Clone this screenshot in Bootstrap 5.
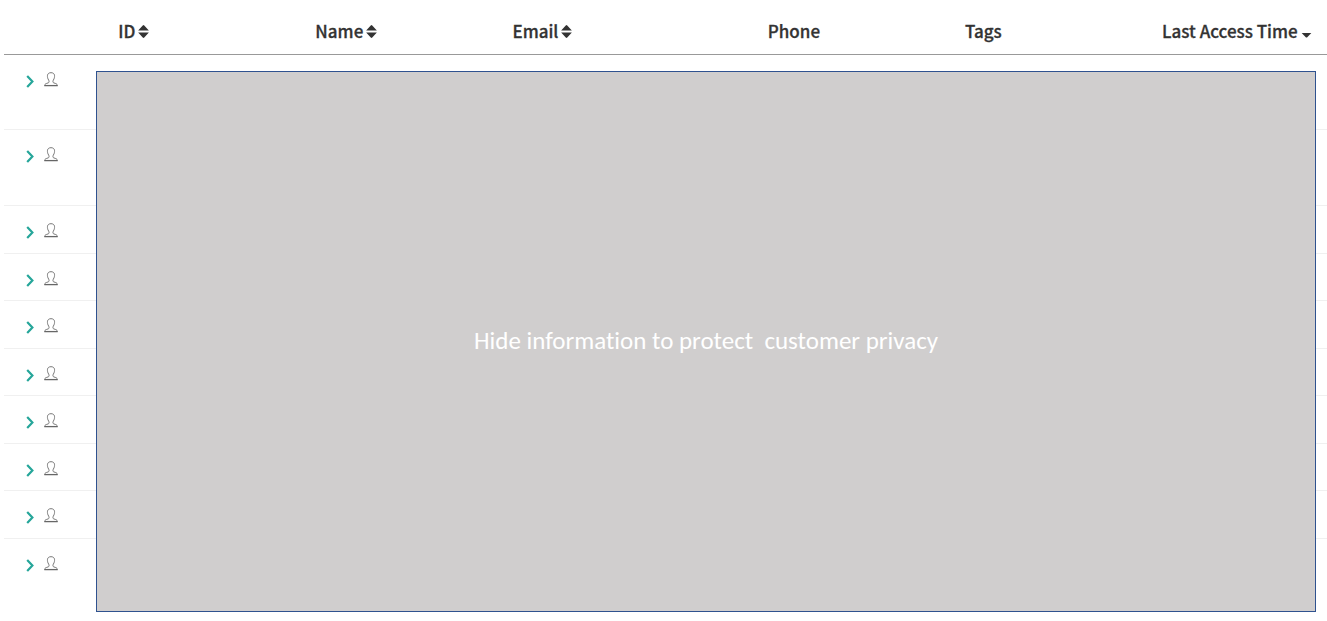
<!DOCTYPE html>
<html lang="en">
<head>
<meta charset="utf-8">
<meta name="viewport" content="width=device-width, initial-scale=1">
<title>Customers</title>
<link href="https://cdn.jsdelivr.net/npm/bootstrap@5.3.0/dist/css/bootstrap.min.css" rel="stylesheet">
<style>
  body { font-family: "Noto Sans CJK SC", "Open Sans", sans-serif; color: #333; }
  .customers { table-layout: fixed; --bs-table-color: #333; }
  .customers th { height: 54px; padding: 8px 0 0 15px; font-size: 17px; line-height: 24px; font-weight: 500; -webkit-text-stroke: .3px #333; white-space: nowrap; vertical-align: middle; border-bottom: 1px solid #999; }
  .customers td { height: 48px; padding: 15px 0 0 20px; border-bottom: 1px solid #f0f0f0; }
  .customers tr:nth-child(even) td { height: 47px; }
  .customers tr.tall td { height: 76px; }
  .customers tr:first-child td { height: 75px; }
  .customers tr:last-child td { border-bottom: 0; }
  .col-icons { width: 7.5%; }
  .col-std { width: 14.9%; }
  .col-email { width: 19.3%; }
  .sort { font: inherit; color: inherit; gap: 3px; vertical-align: top; }
  .sort svg { margin-top: 1px; }
  .expand { color: #26a69a; width: 12px; height: 24px; }
  .person { margin-left: 8px; margin-bottom: 4px; }
  .privacy { inset: 71px 11px 2px 92px; padding-bottom: 2px; background: #d0cece; border: 1px solid #2f528f; color: #fff; font-family: Carlito, Lato, sans-serif; font-size: 25px; line-height: 32px; font-variant-ligatures: none; white-space: pre-wrap; }
</style>
</head>
<body>
<svg class="d-none" aria-hidden="true">
  <symbol id="both" viewBox="0 0 10 14"><path d="M0 6 4.3 1.3Q5 .6 5.7 1.3L10 6ZM0 8h10L5.7 12.7Q5 13.4 4.3 12.7Z" fill="#333"/></symbol>
  <symbol id="down" viewBox="0 0 10 14"><path d="M.5 8.5h9L5.7 12.4Q5 13 4.3 12.4Z" fill="#333"/></symbol>
  <symbol id="chevron" viewBox="0 0 8 13"><path d="M1.2 1 6.4 6.5 1.2 12" fill="none" stroke="currentColor" stroke-width="2.2"/></symbol>
  <symbol id="person" viewBox="0 0 14 15"><path d="M.7 13.5C.8 11.8 2 11.6 4.2 10.9 5.5 10.4 5.1 9 4.6 8 3.6 6.4 3.3 4.9 3.5 3.3 3.7 1.6 5 .7 7 .7S10.3 1.6 10.5 3.3C10.7 4.9 10.4 6.4 9.4 8 8.9 9 8.5 10.4 9.8 10.9 12 11.6 13.2 11.8 13.3 13.5" fill="none" stroke="#777" stroke-width="1"/><path d="M.3 13.6h13.4" stroke="#666" stroke-width="1.3"/></symbol>
</svg>
<main class="position-relative ms-1">
  <table class="table table-borderless customers mb-0">
    <thead>
      <tr>
        <th class="col-icons" aria-label="Expand"></th>
        <th class="col-std" scope="col"><button type="button" class="sort btn p-0 border-0 d-inline-flex align-items-center">ID<svg width="11" height="15"><use href="#both"/></svg></button></th>
        <th class="col-std" scope="col"><button type="button" class="sort btn p-0 border-0 d-inline-flex align-items-center">Name<svg width="11" height="15"><use href="#both"/></svg></button></th>
        <th class="col-email" scope="col"><button type="button" class="sort btn p-0 border-0 d-inline-flex align-items-center">Email<svg width="11" height="15"><use href="#both"/></svg></button></th>
        <th class="col-std" scope="col">Phone</th>
        <th class="col-std" scope="col">Tags</th>
        <th scope="col"><button type="button" class="sort btn p-0 border-0 d-inline-flex align-items-center">Last Access Time<svg width="11" height="15"><use href="#down"/></svg></button></th>
      </tr>
    </thead>
    <tbody id="rows"></tbody>
  </table>
  <div class="privacy position-absolute d-flex align-items-center justify-content-center">Hide information to protect  customer privacy</div>
</main>
<script src="https://cdn.jsdelivr.net/npm/bootstrap@5.3.0/dist/js/bootstrap.bundle.min.js"></script>
<script>
  const tall = [0, 1, 9];
  document.getElementById("rows").innerHTML = Array.from({ length: 10 }, (_, i) =>
    `<tr class="${tall.includes(i) ? "tall" : ""}"><td colspan="7"><div class="d-flex align-items-center">
      <button type="button" class="expand btn p-0 border-0 d-flex align-items-center justify-content-center" aria-label="Expand row ${i + 1}"><svg width="8" height="13"><use href="#chevron"/></svg></button>
      <svg class="person" width="14" height="15"><use href="#person"/></svg></div></td></tr>`).join("");
</script>
</body>
</html>
